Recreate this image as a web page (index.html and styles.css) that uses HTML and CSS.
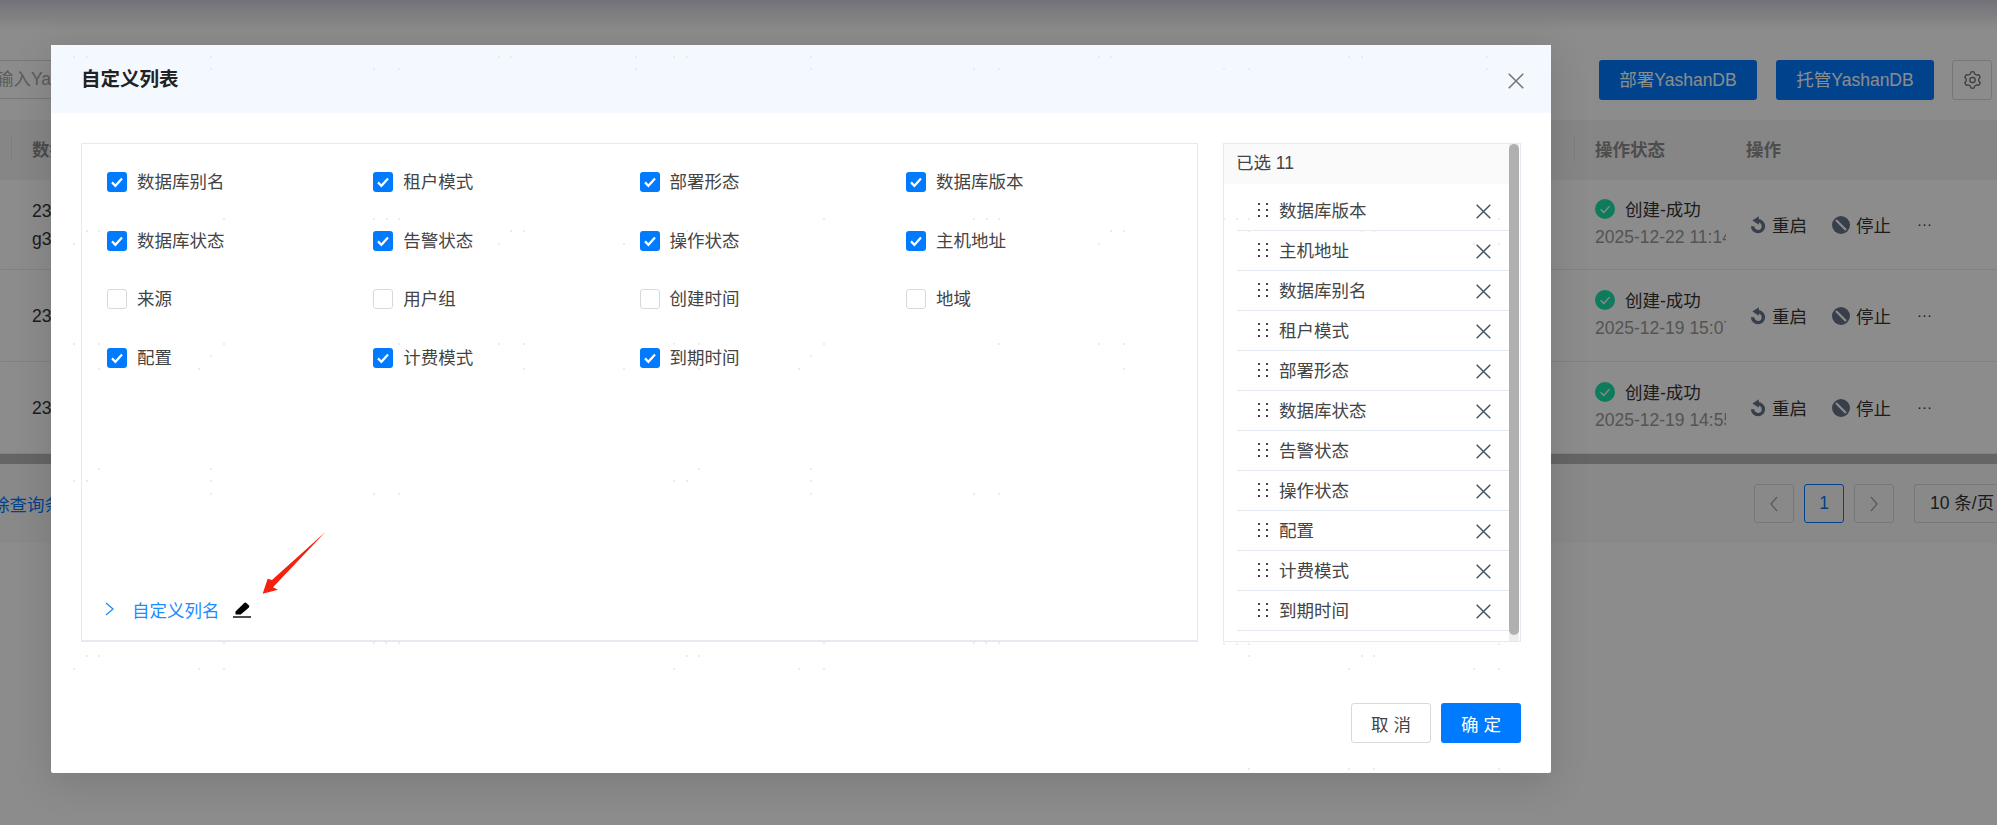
FILE: index.html
```html
<!DOCTYPE html>
<html lang="zh-CN">
<head>
<meta charset="utf-8">
<title>自定义列表</title>
<link rel="stylesheet" href="styles.css">
</head>
<body>
<svg class="sprite" aria-hidden="true">
  <symbol id="i-check" viewBox="0 0 20 20"><path d="M5 10.4l3.4 3.4L15 6.6" fill="none" stroke="#fff" stroke-width="2.2"/></symbol>
  <symbol id="i-x" viewBox="0 0 15 15"><path d="M.7.7l13.6 13.6M14.3.7L.7 14.3" fill="none" stroke="currentColor" stroke-width="1.5"/></symbol>
  <symbol id="i-grip" viewBox="0 0 12 16"><path d="M1 1h2v2H1zM9 1h2v2H9zM1 7h2v2H1zM9 7h2v2H9zM1 13h2v2H1zM9 13h2v2H9z" fill="#444"/></symbol>
  <symbol id="i-restart" viewBox="0 0 16 18"><path d="M8 4.800A5.400 5.400 0 1 1 2.600 10.200" fill="none" stroke="currentColor" stroke-width="3.400"/><path d="M8.800 .2v8.600L2.400 4.400z" fill="currentColor"/></symbol>
  <symbol id="i-stop" viewBox="0 0 18 18"><circle cx="9" cy="9" r="9" fill="currentColor"/><path d="M4 4l10 10" stroke="#fff" stroke-width="2.2"/></symbol>
  <symbol id="i-ok" viewBox="0 0 20 20"><circle cx="10" cy="10" r="10" fill="#18e0a8"/><path d="M5.6 10.3l3.2 3.2 5.8-6.4" fill="none" stroke="#fff" stroke-width="1.3"/></symbol>
</svg>

<div class="page">
  <div class="topshade"></div>
  <div class="toolbar">
    <div class="search">输入Yashan</div>
    <div class="toolbar-actions">
      <button class="btn-primary">部署YashanDB</button>
      <button class="btn-primary">托管YashanDB</button>
      <button class="btn-icon">
        <svg class="gear" viewBox="-0.5 0 19 20"><path d="M6.54 3.230L7.400 .94H10.600L11.460 3.230L13.630 4.480L16.050 4.090L17.650 6.850L16.090 8.750V11.250L17.650 13.150L16.050 15.910L13.630 15.520L11.460 16.770L10.600 19.060H7.400L6.540 16.770L4.370 15.520L1.950 15.910L.35 13.150L1.910 11.250V8.750L.35 6.850L1.950 4.090L4.370 4.480z" fill="none" stroke="currentColor" stroke-width="1.400" stroke-linejoin="round"/><circle cx="9" cy="10" r="3" fill="none" stroke="currentColor" stroke-width="1.400"/></svg>
      </button>
    </div>
  </div>

  <div class="table-row thead">
    <div class="cell-name"><span class="sep"></span>数据</div>
    <div class="cell-status"><span class="sep"></span>操作状态</div>
    <div class="cell-op">操作</div>
  </div>
  <div class="table-row tr">
    <div class="cell-name two"><span>23</span><span>g3</span></div>
    <div class="cell-status">
      <div class="state"><svg class="ok"><use href="#i-ok"/></svg>创建-成功</div>
      <div class="date">2025-12-22 11:14:36</div>
    </div>
    <div class="cell-ops">
      <span class="op"><svg class="ic-restart"><use href="#i-restart"/></svg>重启</span>
      <span class="op"><svg class="ic-stop"><use href="#i-stop"/></svg>停止</span>
      <span class="more">···</span>
    </div>
  </div>
  <div class="table-row tr tall">
    <div class="cell-name">23</div>
    <div class="cell-status">
      <div class="state"><svg class="ok"><use href="#i-ok"/></svg>创建-成功</div>
      <div class="date">2025-12-19 15:07:12</div>
    </div>
    <div class="cell-ops">
      <span class="op"><svg class="ic-restart"><use href="#i-restart"/></svg>重启</span>
      <span class="op"><svg class="ic-stop"><use href="#i-stop"/></svg>停止</span>
      <span class="more">···</span>
    </div>
  </div>
  <div class="table-row tr tall">
    <div class="cell-name">23</div>
    <div class="cell-status">
      <div class="state"><svg class="ok"><use href="#i-ok"/></svg>创建-成功</div>
      <div class="date">2025-12-19 14:55:40</div>
    </div>
    <div class="cell-ops">
      <span class="op"><svg class="ic-restart"><use href="#i-restart"/></svg>重启</span>
      <span class="op"><svg class="ic-stop"><use href="#i-stop"/></svg>停止</span>
      <span class="more">···</span>
    </div>
  </div>
  <div class="hscroll"></div>
  <div class="table-foot">
    <a class="clear-link">除查询条件</a>
    <div class="pager">
      <span class="pg"><svg class="chev" viewBox="0 0 10 16"><path d="M8 1L2 8l6 7" fill="none" stroke="currentColor" stroke-width="1.3"/></svg></span>
      <span class="pg active">1</span>
      <span class="pg"><svg class="chev" viewBox="0 0 10 16"><path d="M2 1l6 7-6 7" fill="none" stroke="currentColor" stroke-width="1.3"/></svg></span>
      <span class="pg-size">10 条/页</span>
    </div>
  </div>
</div>

<div class="overlay">
  <div class="modal">
    <div class="modal-head">
      <h2 class="modal-title">自定义列表</h2>
      <svg class="modal-close"><use href="#i-x"/></svg>
    </div>
    <div class="modal-body">
      <div class="pick">
        <div class="pick-grid">
          <label class="chk"><span class="box on"><svg><use href="#i-check"/></svg></span>数据库别名</label>
          <label class="chk"><span class="box on"><svg><use href="#i-check"/></svg></span>租户模式</label>
          <label class="chk"><span class="box on"><svg><use href="#i-check"/></svg></span>部署形态</label>
          <label class="chk"><span class="box on"><svg><use href="#i-check"/></svg></span>数据库版本</label>
          <label class="chk"><span class="box on"><svg><use href="#i-check"/></svg></span>数据库状态</label>
          <label class="chk"><span class="box on"><svg><use href="#i-check"/></svg></span>告警状态</label>
          <label class="chk"><span class="box on"><svg><use href="#i-check"/></svg></span>操作状态</label>
          <label class="chk"><span class="box on"><svg><use href="#i-check"/></svg></span>主机地址</label>
          <label class="chk"><span class="box"></span>来源</label>
          <label class="chk"><span class="box"></span>用户组</label>
          <label class="chk"><span class="box"></span>创建时间</label>
          <label class="chk"><span class="box"></span>地域</label>
          <label class="chk"><span class="box on"><svg><use href="#i-check"/></svg></span>配置</label>
          <label class="chk"><span class="box on"><svg><use href="#i-check"/></svg></span>计费模式</label>
          <label class="chk"><span class="box on"><svg><use href="#i-check"/></svg></span>到期时间</label>
        </div>
        <div class="custom-row">
          <svg class="custom-chev" viewBox="0 0 9 14"><path d="M1 1l7 6-7 6" fill="none" stroke="currentColor" stroke-width="1.3"/></svg>
          <span class="custom-text">自定义列名</span>
          <svg class="pencil" viewBox="0 0 18 17"><path d="M2.500 13.500V10.500L11 2.200Q12.300 1 13.600 2.200L15.700 4.200Q16.900 5.500 15.700 6.700L7.700 13.500z" fill="#000"/><path d="M0 15.300h18v1.400H0z" fill="#000"/></svg>
        </div>
      </div>
      <div class="chosen">
        <div class="chosen-main">
          <div class="chosen-head">已选 11</div>
          <ul class="chosen-list">
            <li><svg class="grip"><use href="#i-grip"/></svg><span class="chosen-name">数据库版本</span><svg class="rm"><use href="#i-x"/></svg></li>
            <li><svg class="grip"><use href="#i-grip"/></svg><span class="chosen-name">主机地址</span><svg class="rm"><use href="#i-x"/></svg></li>
            <li><svg class="grip"><use href="#i-grip"/></svg><span class="chosen-name">数据库别名</span><svg class="rm"><use href="#i-x"/></svg></li>
            <li><svg class="grip"><use href="#i-grip"/></svg><span class="chosen-name">租户模式</span><svg class="rm"><use href="#i-x"/></svg></li>
            <li><svg class="grip"><use href="#i-grip"/></svg><span class="chosen-name">部署形态</span><svg class="rm"><use href="#i-x"/></svg></li>
            <li><svg class="grip"><use href="#i-grip"/></svg><span class="chosen-name">数据库状态</span><svg class="rm"><use href="#i-x"/></svg></li>
            <li><svg class="grip"><use href="#i-grip"/></svg><span class="chosen-name">告警状态</span><svg class="rm"><use href="#i-x"/></svg></li>
            <li><svg class="grip"><use href="#i-grip"/></svg><span class="chosen-name">操作状态</span><svg class="rm"><use href="#i-x"/></svg></li>
            <li><svg class="grip"><use href="#i-grip"/></svg><span class="chosen-name">配置</span><svg class="rm"><use href="#i-x"/></svg></li>
            <li><svg class="grip"><use href="#i-grip"/></svg><span class="chosen-name">计费模式</span><svg class="rm"><use href="#i-x"/></svg></li>
            <li><svg class="grip"><use href="#i-grip"/></svg><span class="chosen-name">到期时间</span><svg class="rm"><use href="#i-x"/></svg></li>
          </ul>
        </div>
        <div class="vscroll"><div class="vthumb"></div></div>
      </div>
    </div>
    <div class="modal-foot">
      <button class="btn-cancel">取消</button>
      <button class="btn-ok">确定</button>
    </div>

    <svg class="arrow" viewBox="780 270 200 200"><path d="M977 275L816 420 803 416 788 461 834 449 819 442z" fill="#f5200f"/></svg>

    <svg class="watermark" viewBox="51 45 1500 728">
      <defs>
        <path id="dots-left" d="M73 56h2v2h-2zM86 56h2v2h-2zM210 56h2v2h-2zM210 68h2v2h-2zM373 68h2v2h-2zM398 68h2v2h-2zM498 56h2v2h-2zM510 56h2v2h-2zM223 218h2v2h-2zM373 218h2v2h-2zM386 218h2v2h-2zM398 218h2v2h-2zM86 230h2v2h-2zM98 230h2v2h-2zM510 230h2v2h-2zM523 230h2v2h-2zM73 243h2v2h-2zM498 243h2v2h-2zM73 343h2v2h-2zM98 343h2v2h-2zM223 343h2v2h-2zM398 343h2v2h-2zM498 343h2v2h-2zM523 343h2v2h-2zM210 355h2v2h-2zM98 368h2v2h-2zM198 368h2v2h-2zM523 368h2v2h-2zM98 468h2v2h-2zM210 468h2v2h-2zM73 480h2v2h-2zM86 480h2v2h-2zM210 480h2v2h-2zM210 493h2v2h-2zM373 493h2v2h-2zM398 493h2v2h-2zM223 642h2v2h-2zM373 642h2v2h-2zM385 642h2v2h-2zM398 642h2v2h-2zM86 655h2v2h-2zM98 655h2v2h-2zM73 668h2v2h-2zM198 668h2v2h-2zM223 668h2v2h-2z"/>
      </defs>
      <use href="#dots-left" class="wm-dot"/>
      <use href="#dots-left" class="wm-dot" x="600"/>
      <path class="wm-dot" d="M635 56h2v2h-2zM635 68h2v2h-2zM623 243h2v2h-2zM623 368h2v2h-2zM1223 68h2v2h-2zM1248 68h2v2h-2zM1348 56h2v2h-2zM1361 56h2v2h-2zM1486 56h2v2h-2zM1486 68h2v2h-2zM1223 218h2v2h-2zM1236 218h2v2h-2zM1248 218h2v2h-2zM1498 218h2v2h-2zM1248 230h2v2h-2zM1361 230h2v2h-2zM1373 230h2v2h-2zM1473 243h2v2h-2zM1498 243h2v2h-2zM1223 643h2v2h-2zM1236 643h2v2h-2zM1248 643h2v2h-2zM1498 643h2v2h-2zM1248 655h2v2h-2zM1361 655h2v2h-2zM1373 655h2v2h-2zM1348 668h2v2h-2zM1473 668h2v2h-2zM1498 668h2v2h-2zM1248 768h2v2h-2zM1348 768h2v2h-2zM1373 768h2v2h-2zM1498 768h2v2h-2z"/>
    </svg>
  </div>
</div>
</body>
</html>
```

FILE: styles.css
```css
* { box-sizing: border-box; }
html, body { margin: 0; padding: 0; }
body {
  width: 1997px;
  height: 825px;
  overflow: hidden;
  background: #fff;
  color: #333;
  font-family: "Liberation Sans", "Noto Sans CJK SC", sans-serif;
  font-size: 17.5px;
  position: relative;
}
.sprite { position: absolute; width: 0; height: 0; }
button { font: inherit; cursor: pointer; }

/* page behind the dialog */
.page { display: flex; flex-direction: column; height: 825px; }
.topshade { height: 30px; background: linear-gradient(#cfcfdc, #fff); }
.toolbar { margin-top: 30px; height: 40px; display: flex; justify-content: space-between; }
.search {
  width: 80px;
  height: 39px;
  line-height: 37px;
  border: 1px solid #d9d9d9;
  border-left: 0;
  color: #a8a8a8;
  text-indent: -4px;
  white-space: nowrap;
  overflow: hidden;
}
.toolbar-actions { display: flex; gap: 19px; padding-right: 5px; }
.btn-primary {
  width: 158px;
  height: 40px;
  padding: 0 0 4px;
  border: 0;
  border-radius: 3px;
  background: #007bff;
  color: #fff;
}
.btn-icon {
  width: 40px;
  height: 40px;
  margin-left: -1px;
  padding: 0;
  border: 1px solid #d9d9d9;
  border-radius: 3px;
  background: #fff;
  color: #6b6b6b;
  display: flex;
  align-items: center;
  justify-content: center;
}
.gear { width: 17px; height: 18px; }

.table-row { display: grid; grid-template-columns: 1574px 152px 1fr; }
.thead {
  margin-top: 20px;
  height: 60px;
  padding-bottom: 4px;
  background: #f4f4f4;
  align-items: center;
  font-weight: 700;
  color: #8c8c8c;
}
.cell-name { padding-left: 32px; position: relative; }
.cell-status { padding-left: 21px; position: relative; overflow: hidden; white-space: nowrap; }
.cell-op { padding-left: 20px; }
.sep { position: absolute; left: 0; top: 0; bottom: 0; width: 1px; background: #e4e4e4; }
.cell-name .sep { left: 11px; }

.tr { height: 90px; align-items: center; border-bottom: 1px solid #ececec; }
.tr .cell-name { padding-top: 2px; }
.tr .cell-status { margin-bottom: 3px; }
.tall { height: 92px; }
.two { display: flex; flex-direction: column; gap: 5px; line-height: 23px; }
.state { display: flex; align-items: center; gap: 10px; height: 27px; margin-bottom: 2px; }
.ok { width: 20px; height: 20px; flex: none; }
.date { color: #999; height: 27px; line-height: 27px; }
.cell-ops { display: flex; align-items: center; padding-left: 24px; color: #333; }
.op { display: flex; align-items: center; gap: 6px; margin-right: 25px; }
.ic-restart { width: 16px; height: 18px; color: #677489; }
.ic-stop { width: 18px; height: 18px; color: #677489; }
.more { font-size: 15px; margin-left: 1px; position: relative; top: -1px; }

.hscroll { height: 10px; background: #b9b9b9; }
.table-foot {
  height: 79px;
  background: #fafafa;
  display: flex;
  align-items: center;
  justify-content: space-between;
}
.clear-link { color: #007bff; width: 80px; white-space: nowrap; overflow: hidden; text-indent: -8px; }
.pager { display: flex; gap: 10px; }
.pg {
  width: 40px;
  height: 39px;
  border: 1px solid #d9d9d9;
  border-radius: 3px;
  display: flex;
  align-items: center;
  justify-content: center;
  color: #a5a5a5;
}
.pg.active { border-color: #007bff; color: #007bff; }
.chev { width: 10px; height: 16px; }
.pg-size {
  width: 83px;
  height: 39px;
  margin-left: 10px;
  border: 1px solid #d9d9d9;
  border-right: 0;
  border-radius: 3px 0 0 3px;
  padding-left: 15px;
  line-height: 36px;
  white-space: nowrap;
  overflow: hidden;
}

/* dialog */
.overlay {
  position: absolute;
  inset: 0;
  background: rgba(0, 0, 0, .45);
}
.modal {
  position: relative;
  width: 1500px;
  height: 728px;
  margin: 45px 0 0 51px;
  background: #fff;
  border-radius: 2px;
  box-shadow: 0 8px 40px rgba(0, 0, 0, .14);
  display: flex;
  flex-direction: column;
}
.modal-head {
  height: 68px;
  flex: none;
  padding: 0 27px 0 30px;
  background: #f4f8ff;
  display: flex;
  align-items: center;
  justify-content: space-between;
}
.modal-title { margin: 0 0 4px; font-size: 19.500px; font-weight: 700; color: #222; }
.modal-close { width: 16px; height: 16px; color: #777; position: relative; top: 2px; }
.modal-body { display: flex; gap: 25px; padding: 30px 30px 0; height: 529px; flex: none; }

.pick {
  width: 1117px;
  height: 499px;
  border: 1px solid #e6eaf0;
  border-bottom-width: 2px;
  padding: 28px 0 0 25px;
  display: flex;
  flex-direction: column;
  justify-content: space-between;
}
.pick-grid { display: grid; grid-template-columns: repeat(4, 266.300px); grid-auto-rows: 20px; row-gap: 38.670px; }
.chk { display: flex; align-items: flex-start; gap: 10px; height: 20px; color: #444; white-space: nowrap; line-height: 21px; }
.box {
  width: 20px;
  height: 20px;
  flex: none;
  border: 1px solid #d9d9d9;
  border-radius: 3px;
  background: #fff;
}
.box.on { border: 0; background: #007bff; }
.box svg { display: block; width: 20px; height: 20px; }

.custom-row { display: flex; align-items: center; height: 20px; margin: 0 0 21px -2px; color: #1d8cff; }
.custom-chev { width: 9px; height: 14px; margin-right: 18px; }
.custom-text { width: 101px; }
.pencil { width: 18px; height: 17px; }

.chosen {
  width: 298px;
  height: 499px;
  border: 1px solid #e6eaf0;
  display: flex;
}
.chosen-main { flex: 1; min-width: 0; }
.chosen-head { height: 40px; padding-left: 12px; line-height: 38px; background: #fafafa; color: #444; }
.chosen-list { list-style: none; margin: 7px 0 0 13px; padding: 0; }
.chosen-list li {
  height: 40px;
  padding: 0 18px 0 20px;
  border-bottom: 1px solid #e4eaf1;
  display: flex;
  align-items: center;
  color: #444;
}
.grip { width: 12px; height: 16px; flex: none; position: relative; top: -1px; }
.chosen-name { flex: 1; margin-left: 10px; padding-bottom: 3px; }
.rm { width: 15px; height: 15px; flex: none; color: #4a5568; position: relative; top: 1px; }

.vscroll { width: 10px; background: #eee; margin-right: 1px; display: flex; }
.vthumb { width: 10px; height: 491px; border-radius: 5px; background: #b0b0b0; }

.modal-foot { display: flex; justify-content: flex-end; gap: 10px; margin-top: 61px; padding-right: 30px; }
.btn-cancel, .btn-ok {
  width: 80px;
  height: 40px;
  padding: 0;
  border-radius: 3px;
  letter-spacing: 5px;
  text-indent: 5px;
}
.btn-cancel { border: 1px solid #d9d9d9; background: #fff; color: #444; }
.btn-ok { border: 0; background: #007bff; color: #fff; }

.arrow { position: absolute; left: 209px; top: 485px; width: 66.670px; height: 66.670px; }
.watermark { position: absolute; inset: 0; width: 1500px; height: 728px; pointer-events: none; }
.wm-dot { fill: #ececec; }
```
